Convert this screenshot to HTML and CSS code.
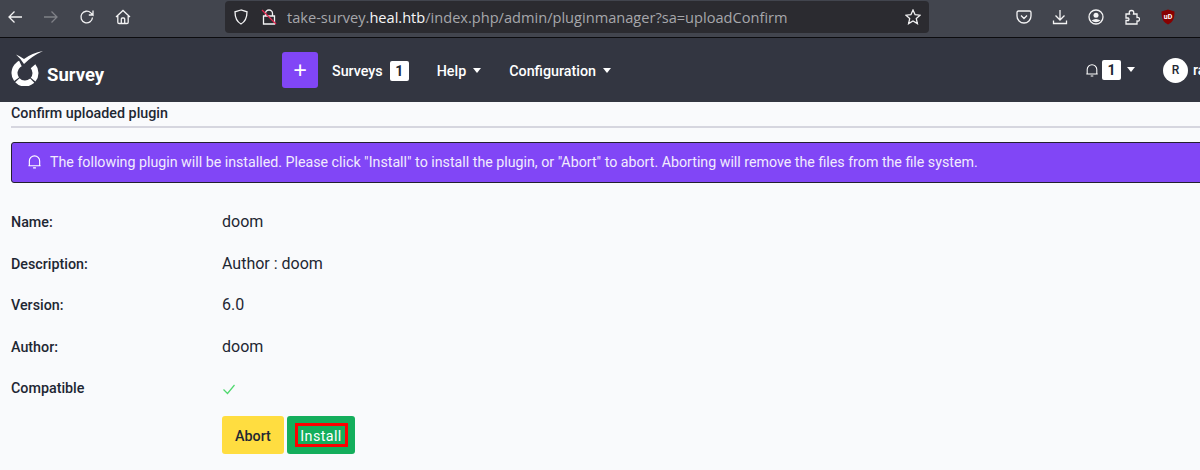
FILE: index.html
```html
<!DOCTYPE html>
<html lang="en">
<head>
<meta charset="utf-8">
<title>Confirm uploaded plugin</title>
<link rel="stylesheet" href="styles.css">
</head>
<body>
<header class="browser">
  <div class="tools">
    <svg class="ico" viewBox="0 0 16 16"><path d="M15 8H2M7.500 2.500 2 8l5.500 5.500"/></svg>
    <svg class="ico dim" viewBox="0 0 16 16"><path d="M1 8h13M8.500 2.500 14 8l-5.500 5.500"/></svg>
    <svg class="ico" viewBox="0 0 16 16"><path d="M13.500 8.500a5.800 5.800 0 1 1-1.700-4.600L14 6V1.500M14 6H9.800"/></svg>
    <svg class="ico" viewBox="0 0 16 16"><path d="M1 8 8 1.500 15 8M2.800 7v6.200q0 1.300 1.300 1.300h7.800q1.300 0 1.300-1.300V7M6.300 14.500V10q0-1 1-1h1.400q1 0 1 1v4.500"/></svg>
  </div>
  <div class="urlbar">
    <svg class="ico shield" viewBox="0 0 16 16"><path d="M8 1 2 2.800c0 6 1.500 9.800 6 12.200 4.500-2.400 6-6.200 6-12.200z"/></svg>
    <svg class="ico lock" viewBox="0 0 16 16"><path d="M4.500 7V4.500a3.500 3.500 0 0 1 7 0V7M2.500 7h11v8h-11z"/><path class="slash" d="M1 1l14 14"/></svg>
    <span class="url">take-survey.<b>heal.htb</b>/index.php/admin/pluginmanager?sa=uploadConfirm</span>
    <svg class="ico star" viewBox="0 0 16 16"><path d="m8 1 2.100 4.700 5 .5-3.800 3.400 1.100 5L8 12l-4.400 2.600 1.100-5L.9 6.200l5-.5z"/></svg>
  </div>
  <div class="addons">
    <svg class="ico" viewBox="0 0 16 16"><path d="M2.500 2h11Q15 2 15 3.500V7a7 7 0 0 1-14 0V3.500Q1 2 2.500 2zM5 6.500l3 3 3-3"/></svg>
    <svg class="ico" viewBox="0 0 16 16"><path d="M8 1v10M3.500 6.500 8 11l4.500-4.500M1.500 11.500v3h13v-3"/></svg>
    <svg class="ico" viewBox="0 0 16 16"><circle cx="8" cy="8" r="7"/><circle class="fill" cx="8" cy="6.300" r="2.500"/><path class="fill" d="M3.500 11.500q4.500-3 9 0-4.500 3.500-9 0z"/></svg>
    <svg class="ico" viewBox="0 0 16 16"><path d="M2 5h3.500Q4.500 1.500 7.500 1.500T9.500 5H13v3.500q2.500-.5 2.500 1.800T13 12v3H2v-3.500h2.500q1-1.500-.2-2.500H2z"/></svg>
    <svg class="ublock" viewBox="0 0 16 16"><path class="ub" d="M8 .5 1.500 2.500c0 7 1.500 10.500 6.500 13 5-2.500 6.500-6 6.500-13z"/><text class="ubtext" x="8" y="10">uD</text></svg>
  </div>
</header>
<nav class="topnav">
  <a class="brand">
    <svg class="logo" viewBox="0 0 32 36"><path class="logo-tick" d="M5 4.500Q9 6 13 9 21 3 32 1 21 6 13 14 10 9 5 4.500z"/><circle class="logo-ring" cx="14" cy="23" r="10.500" pathLength="100" transform="rotate(-40 14 23)"/></svg>
    <span class="brand-name">Survey</span>
  </a>
  <button class="plus">+</button>
  <a class="nav-item">Surveys <span class="count">1</span></a>
  <a class="nav-item caret">Help</a>
  <a class="nav-item caret">Configuration</a>
  <div class="nav-right">
    <a class="bell caret"><svg class="bell-ico" viewBox="0 0 16 16"><path d="M2.500 12.500V7.500a5.500 5.500 0 0 1 11 0v5zM1.500 12.500h13M6.500 14.800h3"/></svg><span class="count">1</span></a>
    <span class="avatar">R</span>
    <span class="username">ra</span>
  </div>
</nav>
<main class="page">
  <h1 class="title">Confirm uploaded plugin</h1>
  <div class="alert">
    <svg class="alert-ico" viewBox="0 0 16 16"><path d="M2.500 12.500V7.500a5.500 5.500 0 0 1 11 0v5zM1.500 12.500h13M6.500 14.800h3"/></svg>
    <span>The following plugin will be installed. Please click "Install" to install the plugin, or "Abort" to abort. Aborting will remove the files from the file system.</span>
  </div>
  <dl class="details">
    <dt>Name:</dt><dd>doom</dd>
    <dt>Description:</dt><dd>Author : doom</dd>
    <dt>Version:</dt><dd>6.0</dd>
    <dt>Author:</dt><dd>doom</dd>
    <dt>Compatible</dt><dd><svg class="check" viewBox="0 0 14 12"><path d="M1.500 6.500 5.500 10.500 12.500 2"/></svg></dd>
  </dl>
  <div class="actions">
    <button class="btn abort">Abort</button>
    <button class="btn install"><span class="mark">Install</span></button>
  </div>
</main>
</body>
</html>
```

FILE: styles.css
```css
* { box-sizing: border-box; }
html, body { margin: 0; height: 470px; overflow: hidden; }
body { width: 1200px; background: #f9fafc; font-family: Roboto, "Noto Sans", sans-serif; color: #1e2733; }

.browser { height: 38px; background: #42454e; border-bottom: 1px solid #0c0c0f; display: flex; align-items: flex-start; }
.ico { width: 16px; height: 16px; fill: none; stroke: #f3f3f4; stroke-width: 1.300; flex: none; }
.ico.dim { stroke: #7f8187; }
.tools { display: flex; gap: 20px; padding: 9px 0 0 7px; width: 225px; }
.urlbar { width: 704px; height: 32px; margin-top: 1px; background: #2b2b30; border-radius: 4px; display: flex; align-items: center; padding: 0 8px; color: #a6a7ab; }
.shield { margin-right: 12px; }
.lock { margin-right: 10px; }
.lock .slash { stroke: #e22850; }
.url { flex: 1; white-space: nowrap; font-family: "Open Sans", sans-serif; font-size: 14.600px; }
.url b { font-weight: 400; color: #f6f6f7; }
.addons { display: flex; gap: 20px; padding: 9px 0 0 87px; align-items: center; }
.fill { fill: #f3f3f4; stroke: none; }
.ublock { width: 16px; height: 16px; }
.ub { fill: #800; }
.ubtext { fill: #fff; font-size: 7px; font-weight: 700; text-anchor: middle; }

.topnav { height: 64px; background: #333641; display: flex; align-items: center; position: relative; color: #fff; font-size: 14px; font-weight: 500; }
.brand { display: flex; align-items: flex-end; width: 282px; padding-left: 11px; }
.logo { width: 32px; height: 36px; margin-bottom: -1px; margin-top: -6px; margin-right: 4px; flex: none; }
.logo-tick { fill: #fff; }
.logo-ring { fill: none; stroke: #fff; stroke-width: 6; stroke-dasharray: 22 2 25 2 28 21; }
.brand-name { font-size: 18.500px; font-weight: 700; line-height: 20px; margin-bottom: 0; }
.plus { width: 36px; height: 36px; background: #8146f6; border: 0; border-radius: 3px; color: #fff; font: 400 24px/34px "Noto Sans", sans-serif; padding: 0; margin-right: 14px; }
.nav-item { display: flex; align-items: center; gap: 7px; margin-right: 28px; font-size: 14.300px; padding-top: 2px; }
.nav-item:first-of-type { gap: 6px; }
.count { background: #fff; color: #1e2733; border-radius: 2px; width: 19px; height: 20px; display: inline-flex; align-items: center; justify-content: center; font-size: 14px; font-weight: 700; }
.caret::after { content: ""; border-top: 5px solid #fff; border-left: 4.500px solid transparent; border-right: 4.500px solid transparent; margin-top: -2px; }
.nav-right { position: absolute; left: 1085px; top: 0; height: 64px; display: flex; align-items: center; white-space: nowrap; }
.bell { display: flex; align-items: center; gap: 3px; margin-right: 28px; }
.bell-ico { width: 14px; height: 14px; fill: none; stroke: #fff; stroke-width: 1.200; }
.bell::after { margin-left: 3px; }
.avatar { width: 25px; height: 25px; background: #fff; color: #1e2733; border-radius: 50%; display: flex; align-items: center; justify-content: center; font-size: 12px; margin-right: 5px; }
.username { font-size: 14.300px; }

.page { padding: 0 0 0 11px; }
.title { margin: 0; height: 26px; padding-top: 2px; border-bottom: 2px solid #d6d6df; font-size: 14.300px; font-weight: 500; line-height: 19px; color: #1e2733; width: 1189px; }
.alert { margin-top: 14px; width: 1200px; height: 41px; background: #8146f6; border: 1px solid #23202f; border-radius: 3px; color: #f1ebfe; display: flex; align-items: center; padding: 0 0 2px 15px; font-size: 14.230px; white-space: nowrap; }
.alert-ico { width: 15px; height: 15px; fill: none; stroke: #fff; stroke-width: 1.200; margin-right: 8px; flex: none; }
.details { margin: 18px 0 0; display: grid; grid-template-columns: 211px 1fr; grid-auto-rows: 41.500px; align-items: center; }
.details dt { font-size: 14.300px; font-weight: 500; color: #1e2733; padding-top: 1px; }
.details dd { margin: 0; font-size: 16px; color: #1e2733; }
.check { width: 14px; height: 12px; fill: none; stroke: #4fd86e; stroke-width: 1.200; display: block; margin-top: 3px; }
.actions { margin: 7px 0 0 211px; display: flex; gap: 3px; }
.btn { height: 38px; border: 0; border-radius: 3px; font-family: inherit; font-size: 14.300px; font-weight: 500; padding: 2px 0 0; }
.abort { width: 62px; background: #ffdd40; color: #1e2733; }
.install { width: 68px; background: #14ae5c; color: #fff; font-weight: 400; letter-spacing: .4px; display: flex; align-items: center; justify-content: center; padding: 0; }
.mark { border: 3px solid #f00; width: 53px; height: 24px; line-height: 20px; display: block; }
```
